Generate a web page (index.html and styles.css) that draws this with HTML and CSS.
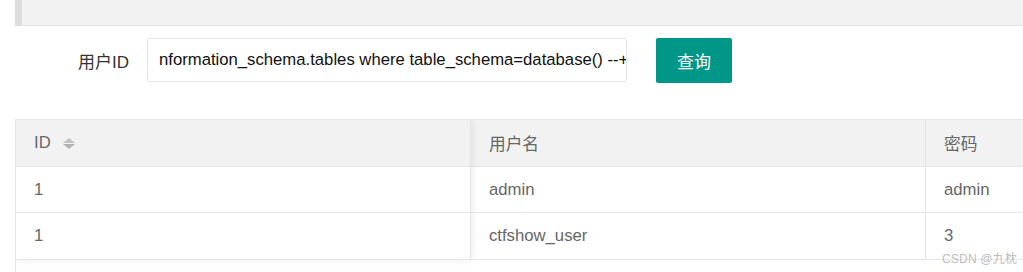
FILE: index.html
```html
<!DOCTYPE html>
<html lang="zh-CN">
<head>
  <meta charset="UTF-8">
  <title>用户查询</title>
  <link rel="stylesheet" href="styles.css">
</head>
<body>
  <div class="quote"></div>

  <form class="search-row">
    <label class="form-label" for="uid">用户ID</label>
    <div class="input-box" id="uid">nformation_schema.tables where table_schema=database() --+</div>
    <button type="button" class="btn">查询</button>
  </form>

  <div class="table-view">
    <div class="col col-fixed">
      <div class="cell head">ID <span class="sort"><i class="up"></i><i class="down"></i></span></div>
      <div class="cell row-a">1</div>
      <div class="cell">1</div>
    </div>
    <div class="col">
      <div class="cell head">用户名</div>
      <div class="cell row-a">admin</div>
      <div class="cell">ctfshow_user</div>
    </div>
    <div class="col">
      <div class="cell head">密码</div>
      <div class="cell row-a">admin</div>
      <div class="cell">3</div>
    </div>
  </div>

  <div class="watermark">CSDN @九枕</div>
</body>
</html>
```

FILE: styles.css
```css
body {
  margin: 0;
  height: 272px;
  overflow: hidden;
  position: relative;
  background-color: #fff;
  font-family: "Liberation Sans", Arial, "Noto Sans CJK SC", sans-serif;
  color: #333;
}

.quote {
  margin-left: 15px;
  height: 25px;
  background-color: #f2f2f2;
  border-left: 7px solid #dddddd;
  border-bottom: 1px solid #e2e2e2;
}

.search-row {
  display: flex;
  align-items: center;
  margin: 12px 0 0 0;
  height: 45px;
}

.form-label {
  width: 147px;
  padding-right: 18px;
  box-sizing: border-box;
  text-align: right;
  font-size: 17px;
  color: #333;
}

.input-box {
  width: 480px;
  height: 44px;
  box-sizing: border-box;
  border: 1px solid #e6e6e6;
  border-radius: 2px;
  padding-left: 11px;
  display: flex;
  align-items: center;
  white-space: nowrap;
  overflow: hidden;
  font-size: 16.7px;
  color: #111;
  align-self: flex-start;
}

.btn {
  margin-left: 29px;
  width: 76px;
  height: 45px;
  border: none;
  border-radius: 2px;
  background-color: #009688;
  color: #fff;
  font-family: inherit;
  font-size: 17px;
  cursor: pointer;
}

.table-view {
  display: flex;
  margin: 36px 0 0 15px;
  border-left: 1px solid #e6e6e6;
  border-top: 1px solid #e6e6e6;
  height: 152px;
  overflow: hidden;
  color: #666;
  font-size: 16.7px;
}

.col {
  display: flex;
  flex-direction: column;
  flex: none;
  width: 455px;
  align-self: flex-start;
}

.col-fixed {
  position: relative;
  z-index: 1;
  background-color: #fff;
  box-shadow: 1px 0 8px rgba(0, 0, 0, 0.08);
}

.cell {
  height: 47px;
  box-sizing: border-box;
  border-right: 1px solid #e6e6e6;
  border-bottom: 1px solid #e6e6e6;
  padding-left: 18px;
  display: flex;
  align-items: center;
}

.cell.head {
  background-color: #f2f2f2;
}

.cell.row-a {
  height: 46px;
}

.sort {
  display: inline-flex;
  flex-direction: column;
  gap: 1px;
  margin-left: 12px;
}

.sort i {
  width: 0;
  height: 0;
  border-left: 6px solid transparent;
  border-right: 6px solid transparent;
}

.sort .up {
  border-bottom: 5px solid #c2c2c2;
}

.sort .down {
  border-top: 5px solid #b2b2b2;
}

.watermark {
  position: absolute;
  left: 942px;
  top: 249px;
  font-size: 12px;
  color: #bdbdbd;
  letter-spacing: 0.2px;
}
```
